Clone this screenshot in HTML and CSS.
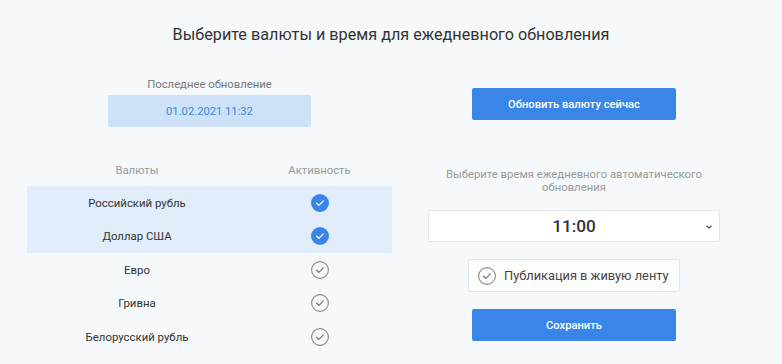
FILE: index.html
```html
<!DOCTYPE html>
<html lang="ru">
<head>
    <meta charset="UTF-8">
    <title>Обновление валют</title>
    <link rel="stylesheet" href="styles.css">
</head>
<body>
    <div class="page">
        <h1 class="title">Выберите валюты и время для ежедневного обновления</h1>

        <div class="columns">
            <div class="left">
                <div class="last-label">Последнее обновление</div>
                <div class="last-date">01.02.2021 11:32</div>

                <div class="table">
                    <div class="row head">
                        <span>Валюты</span>
                        <span>Активность</span>
                    </div>
                    <div class="row active">
                        <span>Российский рубль</span>
                        <span class="check on"><svg viewBox="0 0 18 18"><circle cx="9" cy="9" r="9"/><path d="M5.6 9.2l2.3 2.1 4.4-4.4"/></svg></span>
                    </div>
                    <div class="row active">
                        <span>Доллар США</span>
                        <span class="check on"><svg viewBox="0 0 18 18"><circle cx="9" cy="9" r="9"/><path d="M5.6 9.2l2.3 2.1 4.4-4.4"/></svg></span>
                    </div>
                    <div class="row">
                        <span>Евро</span>
                        <span class="check"><svg viewBox="0 0 18 18"><circle cx="9" cy="9" r="8.4"/><path d="M5.6 9.2l2.3 2.1 4.4-4.4"/></svg></span>
                    </div>
                    <div class="row">
                        <span>Гривна</span>
                        <span class="check"><svg viewBox="0 0 18 18"><circle cx="9" cy="9" r="8.4"/><path d="M5.6 9.2l2.3 2.1 4.4-4.4"/></svg></span>
                    </div>
                    <div class="row">
                        <span>Белорусский рубль</span>
                        <span class="check"><svg viewBox="0 0 18 18"><circle cx="9" cy="9" r="8.4"/><path d="M5.6 9.2l2.3 2.1 4.4-4.4"/></svg></span>
                    </div>
                </div>
            </div>

            <div class="right">
                <button class="btn">Обновить валюту сейчас</button>
                <div class="time-label">Выберите время ежедневного автоматического обновления</div>
                <div class="select">
                    <span>11:00</span>
                    <svg class="chevron" viewBox="0 0 8 6"><path d="M1.5 1.8l2.5 2.4 2.5-2.4"/></svg>
                </div>
                <label class="publish">
                    <span class="check"><svg viewBox="0 0 18 18"><circle cx="9" cy="9" r="8.4"/><path d="M5.6 9.2l2.3 2.1 4.4-4.4"/></svg></span>
                    Публикация в живую ленту
                </label>
                <button class="btn">Сохранить</button>
            </div>
        </div>
    </div>
</body>
</html>
```

FILE: styles.css
```css
body {
    margin: 0;
    background: #f5f9fc;
    font-family: Roboto, 'Noto Sans', sans-serif;
    color: #333;
}
.page { padding-top: 25px; }
.title {
    margin: 0; text-align: center;
    font-size: 16.2px; line-height: 20px; font-weight: 400; color: #333;
}
.columns {
    display: flex; gap: 36px;
    padding-left: 27px; margin-top: 33px;
}
.left { width: 365px; display: flex; flex-direction: column; align-items: center; }
.last-label { font-size: 11.3px; line-height: 14px; color: #777; }
.last-date {
    margin-top: 3px; width: 203px; height: 32px;
    background: #cde1f8; color: #3a86e0; border-radius: 2px;
    display: flex; align-items: center; justify-content: center;
    font-size: 11.2px;
}
.table { width: 100%; margin-top: 30px; }
.row {
    display: grid; grid-template-columns: 220px 145px;
    height: 33.5px; align-items: center; justify-items: center;
    font-size: 11.4px; color: #333;
}
.row.head { height: 28px; align-items: start; font-size: 11.3px; color: #999; }
.row.head span { margin-top: 7px; }
.row.active { background: #e1edfa; }
.row:nth-child(2) { margin-top: 1px; }
.check { display: flex; width: 18px; height: 18px; }
.check svg { width: 18px; height: 18px; }
.check svg circle { fill: none; stroke: #8a8a8a; stroke-width: 1.1; }
.check svg path { fill: none; stroke: #777; stroke-width: 1.2; stroke-linecap: round; stroke-linejoin: round; }
.check.on svg circle { fill: #3a86e8; stroke: none; }
.check.on svg path { stroke: #fff; }

.right { width: 292px; display: flex; flex-direction: column; align-items: center; padding-top: 10px; }
.btn {
    width: 204px; height: 32px; border: none; border-radius: 2px;
    background: #3a86e8; color: #fff;
    font-family: inherit; font-size: 11.2px; font-weight: 500;
}
.time-label {
    margin-top: 48px; text-align: center;
    font-size: 11.3px; line-height: 13px; color: #999;
}
.select {
    margin-top: 16px; width: 100%; height: 32px; box-sizing: border-box;
    background: #fff; border: 1px solid #e3e7ec; border-radius: 2px;
    display: flex; align-items: center; justify-content: center;
    position: relative;
    font-size: 17.2px; font-weight: 500; color: #333;
}
.chevron {
    position: absolute; right: 6px; top: 13px;
    width: 8px; height: 6px;
}
.chevron path { fill: none; stroke: #555; stroke-width: 1.3; }
.publish {
    margin-top: 17px; width: 212px; height: 33px; box-sizing: border-box;
    background: #fdfdfe; border: 1px solid #e3e7ec; border-radius: 2px;
    display: flex; align-items: center; gap: 8px; padding-left: 9px;
    font-size: 12.8px; color: #444;
}
.publish + .btn { margin-top: 17px; }
```
